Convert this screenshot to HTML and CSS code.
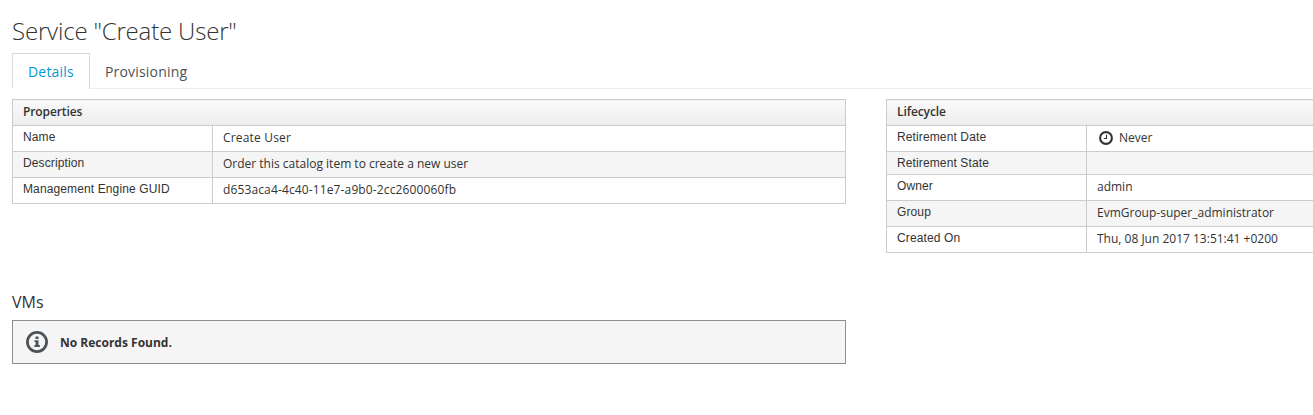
FILE: index.html
```html
<!DOCTYPE html>
<html lang="en">
<head>
<meta charset="utf-8">
<title>Service "Create User"</title>
<link rel="stylesheet" href="styles.css">
</head>
<body>
<main class="page">
  <h1 class="title">Service "Create User"</h1>
  <nav class="tabs">
    <a class="tab active">Details</a>
    <a class="tab">Provisioning</a>
  </nav>
  <div class="columns">
    <table class="props">
      <thead><tr><th colspan="2">Properties</th></tr></thead>
      <tbody>
        <tr><td class="label">Name</td><td class="name">Create User</td></tr>
        <tr><td class="label">Description</td><td>Order this catalog item to create a new user</td></tr>
        <tr><td class="label">Management Engine GUID</td><td class="guid">d653aca4-4c40-11e7-a9b0-2cc2600060fb</td></tr>
      </tbody>
    </table>
    <table class="props flush">
      <thead><tr><th colspan="2">Lifecycle</th></tr></thead>
      <tbody>
        <tr><td class="label">Retirement Date</td><td><span class="with-icon"><svg class="clock" viewBox="0 0 14 14"><circle cx="7" cy="7" r="5.9" fill="none" stroke="#333" stroke-width="2.1"/><path d="M7.5 3.8v3.7H4.8" fill="none" stroke="#333" stroke-width="1.1"/></svg>Never</span></td></tr>
        <tr class="empty"><td class="label">Retirement State</td><td></td></tr>
        <tr><td class="label">Owner</td><td>admin</td></tr>
        <tr><td class="label">Group</td><td>EvmGroup-super_administrator</td></tr>
        <tr><td class="label">Created On</td><td>Thu, 08 Jun 2017 13:51:41 +0200</td></tr>
      </tbody>
    </table>
  </div>
  <h3 class="subtitle">VMs</h3>
  <div class="alert">
    <svg class="info" viewBox="0 0 22 22"><circle cx="11" cy="11" r="9.6" fill="none" stroke="#4d5258" stroke-width="2.7"/><path d="M9.5 5.5h3v2.5h-3zM8.5 9.2h4v4.8h1.3v1.9H8.4V14h1.2v-3H8.5z" fill="#4d5258"/></svg>
    <strong class="message">No Records Found.</strong>
  </div>
</main>
</body>
</html>
```
FILE: styles.css
```css
* { box-sizing: border-box; }

body {
  margin: 0;
  background: #fff;
  color: #333;
  font: 12px/20px "Open Sans", sans-serif;
}

.page { padding: 18px 0 0 12px; }

.title {
  margin: 0;
  font-size: 24px;
  font-weight: 300;
  line-height: 26px;
  letter-spacing: -0.18px;
}

.tabs {
  display: flex;
  height: 36px;
  margin-top: 9px;
  border-bottom: 1px solid #ededec;
  font-size: 14px;
  letter-spacing: 0.18px;
}

.tab {
  height: 36px;
  padding: 9px 15px 0;
  color: #4d5258;
}

.tab.active {
  width: 78px;
  padding-top: 8px;
  border: 1px solid #d9d9d9;
  border-bottom-color: #fff;
  background: #fff;
  color: #0099d3;
}

.columns {
  display: grid;
  grid-template-columns: 834px 1fr;
  column-gap: 40px;
  align-items: start;
  height: 193px;
  margin-top: 10px;
}

.props {
  width: 100%;
  border-collapse: collapse;
}

.props th,
.props td {
  height: 26px;
  padding: 2px 10px 3px;
  border: 1px solid #ccc;
  text-align: left;
  vertical-align: top;
}

.props th {
  background: linear-gradient(#fafafa, #ededed);
  font-weight: 600;
  letter-spacing: -0.1px;
}

.props .label {
  width: 200px;
  padding: 1px 10px 4px;
  font-family: "Liberation Sans", sans-serif;
  letter-spacing: 0.12px;
}

.props .name { letter-spacing: 0.18px; }

.props .guid { letter-spacing: 0.13px; }

.props tr:nth-child(even) td { background: #f5f5f5; }

.props .empty td {
  height: 23px;
  padding-bottom: 1px;
}

.flush th,
.flush td:last-child { border-right: 0; }

.with-icon {
  display: flex;
  align-items: center;
  gap: 6px;
  padding-left: 2px;
}

.clock { width: 14px; height: 14px; }

.subtitle {
  margin: 0;
  font-size: 16px;
  font-weight: 400;
  line-height: 20px;
}

.alert {
  display: flex;
  align-items: center;
  gap: 12px;
  width: 834px;
  height: 44px;
  margin-top: 8px;
  padding-left: 13px;
  border: 1px solid #8b8d8f;
  background: #f5f5f5;
}

.info { width: 22px; height: 22px; }

.message { padding-top: 2px; }
```
